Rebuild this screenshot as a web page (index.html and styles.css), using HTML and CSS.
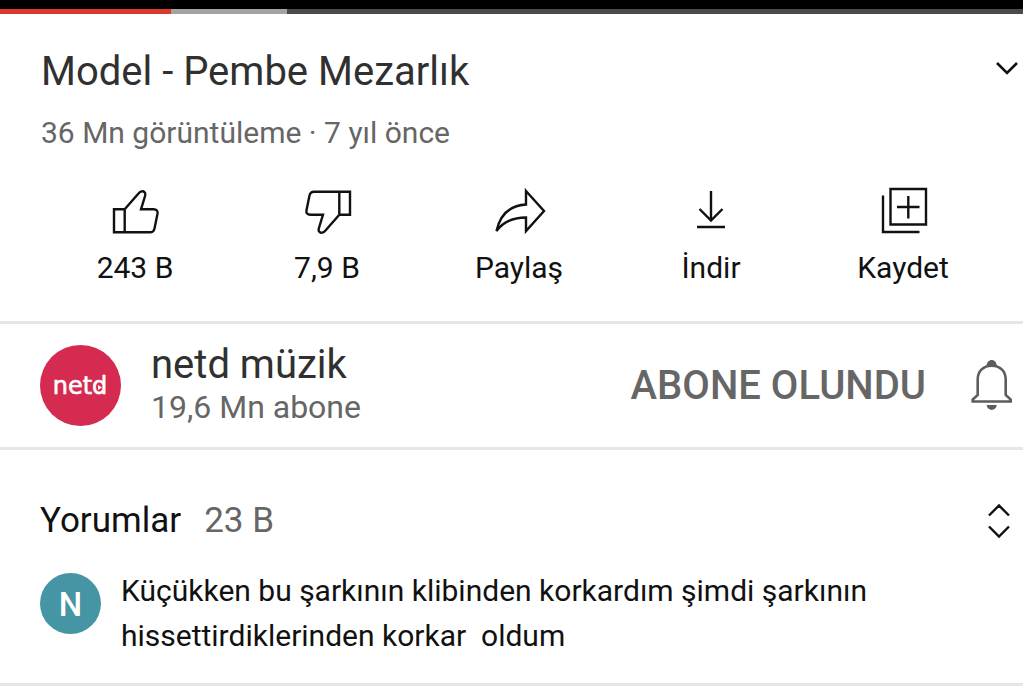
FILE: index.html
```html
<!DOCTYPE html>
<html lang="tr">
<head>
    <meta charset="UTF-8">
    <meta name="viewport" content="width=device-width, initial-scale=1.0">
    <title>Model - Pembe Mezarlık</title>
    <link rel="stylesheet" href="styles.css">
</head>
<body>
    <!--Bottom edge of the player-->
    <div class="player">
        <div class="progress">
            <div class="played"></div>
            <div class="loaded"></div>
        </div>
    </div>

    <!--Video title and counts-->
    <section class="video">
        <div class="video-head">
            <h1 class="title">Model - Pembe Mezarlık</h1>
            <button class="icon-button expand" aria-label="Açıklamayı göster">
                <svg width="24" height="24" viewBox="0 0 24 24"><path d="M2 7l10 10L22 7"/></svg>
            </button>
        </div>
        <p class="views">36 Mn görüntüleme · 7 yıl önce</p>
    </section>

    <!--Action buttons-->
    <div class="actions">
        <button class="action">
            <svg width="56" height="56" viewBox="0 0 56 56">
                <path d="M7 25.3h10.7v23H7zM17.7 25.3L31.5 9.5C33.5 7 36 6.7 37.5 8.2Q38.9 9.5 38.2 11.5L34 25.3H46.5Q51.3 25.3 50.5 29.8L47.5 44.5Q46.7 48.3 43 48.3H17.7"/>
            </svg>
            <span>243 B</span>
        </button>
        <button class="action">
            <svg width="56" height="56" viewBox="0 0 56 56">
                <path transform="rotate(180 29 28)" d="M7 25.3h10.7v23H7zM17.7 25.3L31.5 9.5C33.5 7 36 6.7 37.5 8.2Q38.9 9.5 38.2 11.5L34 25.3H46.5Q51.3 25.3 50.5 29.8L47.5 44.5Q46.7 48.3 43 48.3H17.7"/>
            </svg>
            <span>7,9 B</span>
        </button>
        <button class="action">
            <svg width="56" height="56" viewBox="0 0 56 56">
                <path d="M35 7l18 20-18 20V33.5C22 33.5 12 38 5.5 47 9 31 18 21.5 35 20.5z"/>
            </svg>
            <span>Paylaş</span>
        </button>
        <button class="action">
            <svg width="56" height="56" viewBox="0 0 56 56">
                <path d="M28 7v29.5M16.5 25L28 36.5 39.5 25M14 43h28"/>
            </svg>
            <span>İndir</span>
        </button>
        <button class="action">
            <svg width="56" height="56" viewBox="0 0 56 56">
                <path d="M15.5 5H51v35.5H15.5zM8 11.5V48h36.5M33.3 12v22.5M22 23h22.5"/>
            </svg>
            <span>Kaydet</span>
        </button>
    </div>

    <!--Channel-->
    <section class="channel">
        <a class="channel-link" href="#kanal">
            <svg class="logo" width="81" height="81" viewBox="0 0 81 81" role="img" aria-label="netd">
                <circle cx="40.5" cy="40.5" r="40.5"/>
                <text x="40" y="49" text-anchor="middle">netd</text>
                <path d="M58 40l4 2.5-4 2.5z"/>
            </svg>
            <span class="channel-text">
                <span class="channel-name">netd müzik</span>
                <span class="channel-subs">19,6 Mn abone</span>
            </span>
        </a>
        <button class="subscribed">ABONE OLUNDU</button>
        <button class="icon-button bell" aria-label="Bildirimler">
            <svg width="48" height="56" viewBox="0 0 48 56">
                <path d="M5.7 44.5v-2l5-4.5V22.5C10.7 14 16.5 8.7 24.7 8.7S38.7 14 38.7 22.5V38l5 4.5v2z"/>
                <path class="solid" d="M19.5 9C20 1 29.4 1 29.9 9zM19.5 48h10.4C28.5 54.5 21 54.5 19.5 48z"/>
            </svg>
        </button>
    </section>

    <!--Comments-->
    <section class="comments">
        <div class="comments-head">
            <h2 class="comments-title">Yorumlar</h2>
            <span class="comments-count">23 B</span>
            <button class="icon-button sort" aria-label="Yorumları genişlet">
                <svg width="24" height="36" viewBox="0 0 24 36"><path d="M2 12.5L12 2.5l10 10M2 23.5l10 10 10-10"/></svg>
            </button>
        </div>
        <div class="comment">
            <div class="avatar">N</div>
            <p class="comment-text">Küçükken bu şarkının klibinden korkardım şimdi şarkının hissettirdiklerinden korkar&nbsp; oldum</p>
        </div>
    </section>
</body>
</html>
```

FILE: styles.css
```css
* {
    box-sizing: border-box;
}
body {
    margin: 0;
    background-color: white;
    color: #111;
    font-family: Roboto, "Liberation Sans", sans-serif;
}
h1, h2, p {
    margin: 0;
    font-weight: 400;
}
button {
    padding: 0;
    border: none;
    background: none;
    color: inherit;
    font: inherit;
    cursor: pointer;
}
svg {
    display: block;
    fill: none;
    stroke: #111;
    stroke-width: 2.4;
}
/* Player edge with the progress line */
.player {
    padding-top: 9px;
    background-color: black;
}
.progress {
    display: flex;
    height: 5px;
    background-color: #4a4a4a;
}
.played {
    width: 16.7%;
    background-color: #dc3a30;
}
.loaded {
    width: 11.4%;
    background-color: #a3a3a3;
}
/* Title */
.video {
    padding: 34px 4px 0 41px;
}
.video-head {
    display: flex;
    justify-content: space-between;
    align-items: flex-start;
}
.title {
    font-size: 40px;
    line-height: 48px;
    color: #303030;
}
.expand {
    padding-top: 8px;
}
.expand svg {
    stroke-width: 2.6;
}
.views {
    margin-top: 19px;
    font-size: 30px;
    line-height: 36px;
    color: #666;
}
/* Like, dislike, share, download, save */
.actions {
    display: grid;
    grid-template-columns: repeat(5, 1fr);
    padding: 33px 24px 35px 39px;
    border-bottom: 3px solid #e6e6e6;
}
.action {
    display: flex;
    flex-direction: column;
    align-items: center;
    gap: 10px;
    font-size: 30px;
    line-height: 36px;
}
/* Channel row */
.channel {
    display: flex;
    align-items: center;
    padding: 19px 8px 20px 40px;
    border-bottom: 3px solid #e6e6e6;
}
.channel-link {
    display: flex;
    align-items: center;
    gap: 30px;
    flex: 1;
    color: #303030;
    text-decoration: none;
}
.logo circle {
    fill: #d62b50;
    stroke: none;
}
.logo text {
    fill: white;
    stroke: white;
    stroke-width: 0.6;
    font-family: "DejaVu Sans", sans-serif;
    font-size: 24px;
}
.logo path {
    fill: white;
    stroke: none;
}
.channel-text {
    display: flex;
    flex-direction: column;
}
.channel-name {
    font-size: 40px;
    line-height: 44px;
}
.channel-subs {
    font-size: 32px;
    line-height: 40px;
    color: #666;
}
.subscribed {
    margin-right: 41px;
    font-size: 40px;
    font-weight: 500;
    color: #666;
}
.bell svg {
    stroke: #5c5c5c;
    stroke-width: 2.6;
}
.bell .solid {
    fill: #5c5c5c;
    stroke: none;
}
/* Comments */
.comments {
    padding: 49px 12px 25px 40px;
    border-bottom: 3px solid #e6e6e6;
}
.comments-head {
    display: flex;
    align-items: center;
    gap: 23px;
    line-height: 44px;
}
.comments-title, .comments-count {
    font-size: 35px;
}
.comments-count {
    color: #666;
}
.sort {
    margin-left: auto;
}
.comment {
    display: flex;
    gap: 20px;
    margin-top: 25px;
}
.avatar {
    flex: none;
    width: 61px;
    height: 61px;
    margin-top: 5px;
    border-radius: 50%;
    background-color: #4595a5;
    color: white;
    font-size: 33px;
    font-weight: 500;
    line-height: 63px;
    text-align: center;
}
.comment-text {
    max-width: 800px;
    font-size: 30px;
    line-height: 45px;
}
```
